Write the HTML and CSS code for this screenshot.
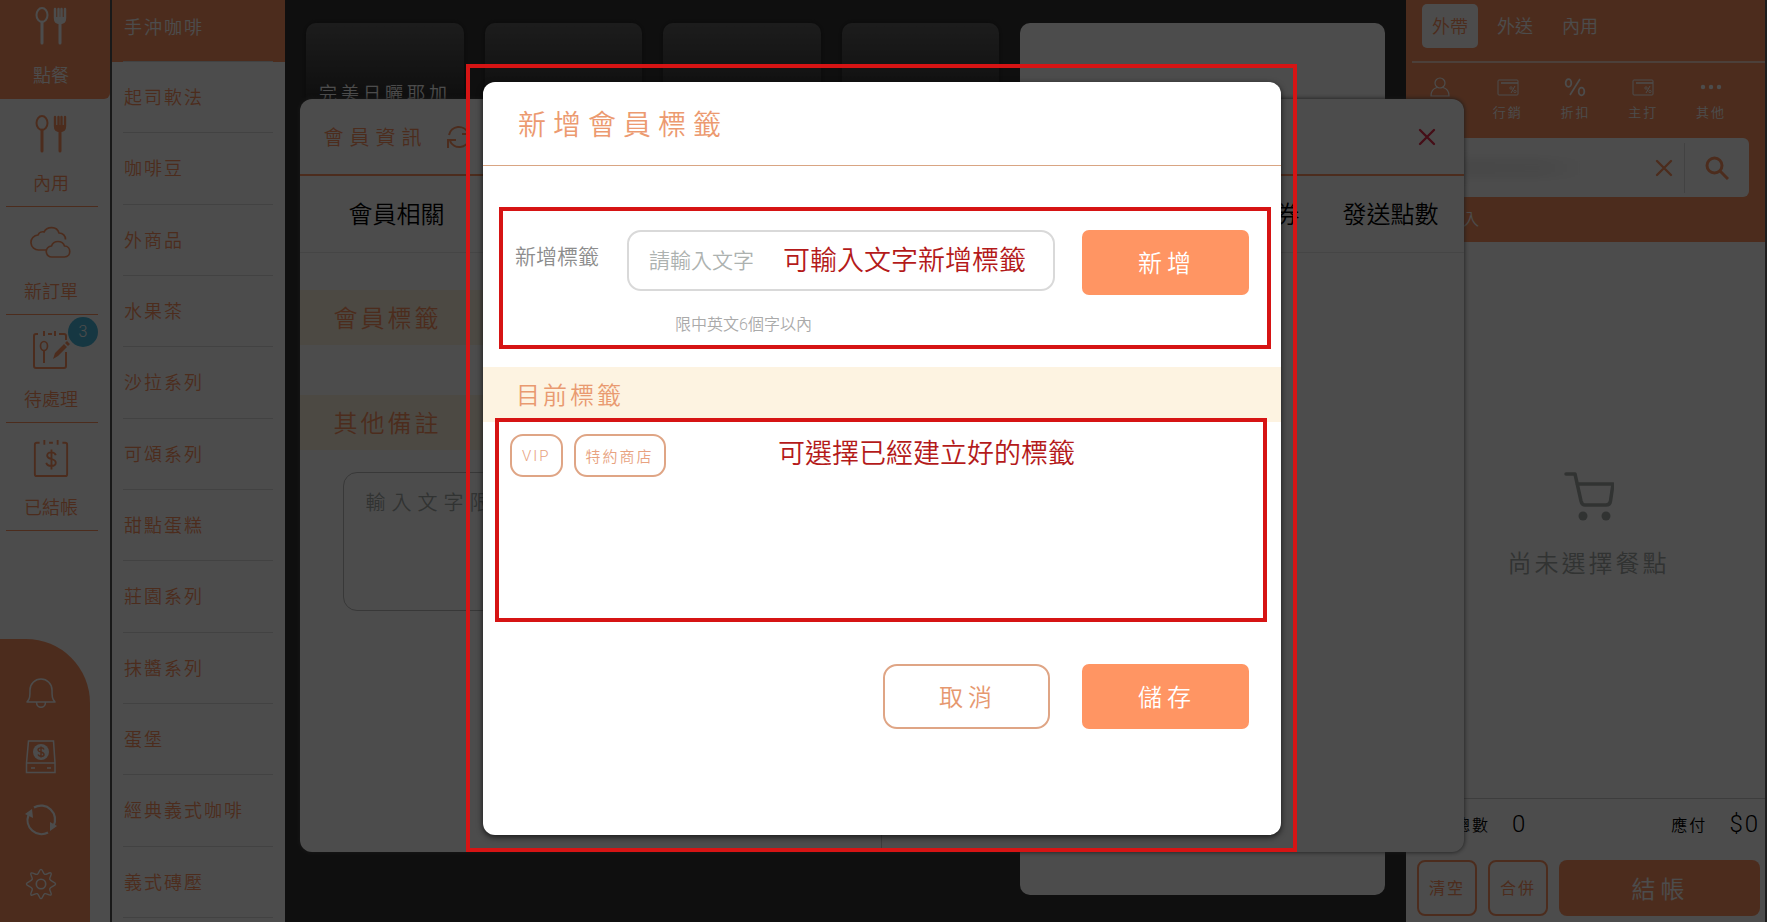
FILE: index.html
```html
<!DOCTYPE html>
<html lang="zh-Hant">
<head>
    <meta charset="UTF-8">
    <meta name="viewport" content="width=device-width, initial-scale=1.0">
    <title>新增會員標籤</title>
    <link rel="stylesheet" href="styles.css">
</head>
<body>
    <svg class="sprite" aria-hidden="true">
        <symbol id="i-cutlery" viewBox="0 0 32 38">
            <ellipse cx="7" cy="8" rx="5.5" ry="7" fill="none" stroke="currentColor" stroke-width="2"/>
            <path d="M7 15v21" stroke="currentColor" stroke-width="3" stroke-linecap="round"/>
            <path d="M25 16v20" stroke="currentColor" stroke-width="3" stroke-linecap="round"/>
            <path d="M20 2v9q0 5 5 5t5-5V2M23.500 2v11M26.500 2v11" fill="none" stroke="currentColor" stroke-width="2.400" stroke-linecap="round"/>
            <path d="M20 10h10q0 6-5 7-5-1-5-7z" fill="currentColor"/>
        </symbol>
        <symbol id="i-clouds" viewBox="0 0 42 38">
            <path d="M17 27H9a7.500 7.500 0 0 1-1-15c1-3 4-3.500 6-3 3-6 13-6 15 1 4 0 6.500 3 6.500 6.500" fill="none" stroke="currentColor" stroke-width="1.700"/>
            <path d="M22 34a5.500 5.500 0 0 1-.500-11c2-6 11-6 13 0 7 0 7 11 0 11z" fill="none" stroke="currentColor" stroke-width="1.700"/>
        </symbol>
        <symbol id="i-pending" viewBox="0 0 38 38">
            <path d="M6 3H4Q2 3 2 5v30q0 2 2 2h28q2 0 2-2V21M16 3h4M27 3h5q2 0 2 2v4M12 0v5M23 0v5" fill="none" stroke="currentColor" stroke-width="2"/>
            <ellipse cx="12" cy="15" rx="3.500" ry="4.500" fill="none" stroke="currentColor" stroke-width="1.700"/>
            <path d="M12 20v12" stroke="currentColor" stroke-width="2"/>
            <path d="M21 28l2-6 9-9 3 3-9 9zM33 12l2-2 3 3-2 2z" fill="currentColor"/>
        </symbol>
        <symbol id="i-paid" viewBox="0 0 38 40">
            <path d="M7 4H4Q2 4 2 6v31q0 2 2 2h30q2 0 2-2V6q0-2-2-2h-3M17 4h4M12 1v5M26 1v5" fill="none" stroke="currentColor" stroke-width="2"/>
            <path d="M24 17c-1-4-9-4-9 .500 0 4.500 9 2.500 9 7.500 0 4.500-9 4.500-10 0M19.500 11v21" fill="none" stroke="currentColor" stroke-width="2"/>
        </symbol>
        <symbol id="i-bell" viewBox="0 0 32 34">
            <path d="M2 26c3-3 3-6 3-12a11 11 0 0 1 22 0c0 6 0 9 3 12zM11.500 26c0 7 9 7 9 0" fill="none" stroke="currentColor" stroke-width="1.500" stroke-linejoin="round"/>
        </symbol>
        <symbol id="i-drawer" viewBox="0 0 32 34">
            <path d="M3.500 1h25L30 23v9.500H1.500V23zM1.500 23H30M6 28h4M22 28h4" fill="none" stroke="currentColor" stroke-width="1.500"/>
            <circle cx="16" cy="12" r="8" fill="currentColor"/>
            <path d="M19 9.500c-1-2.500-6-2-6 .500 0 2.500 6 1.500 6 4.500 0 2.500-5 2.500-6 0M16 6.500v11" fill="none" stroke="#ff9563" stroke-width="1.500"/>
        </symbol>
        <symbol id="i-sync" viewBox="0 0 32 34">
            <path d="M9 4.500A14 14 0 0 1 28.500 23M23 29.500A14 14 0 0 1 3.500 12" fill="none" stroke="currentColor" stroke-width="2.200"/>
            <path d="M0 11l7-5 1 9zM25 19v9l7-5z" fill="currentColor"/>
        </symbol>
        <symbol id="i-gear" viewBox="0 0 34 34">
            <path d="M17 1.500c2 0 2 4.500 4 5.200s5-2.800 6.600-1.300-2 4.600-1.300 6.600 6.200 3 6.200 5-5.500 3-6.200 5 2.800 5.200 1.300 6.600-4.600-2-6.600-1.300-2 5.200-4 5.200-2-4.500-4-5.200-5.200 2.800-6.600 1.300 2-4.600 1.300-6.600-6.200-3-6.200-5 5.500-3 6.200-5-2.800-5.200-1.300-6.600 4.600 2 6.600 1.300 2-5.200 4-5.200z" fill="none" stroke="currentColor" stroke-width="1.500"/>
            <circle cx="17" cy="17" r="5" fill="none" stroke="currentColor" stroke-width="1.700"/>
        </symbol>
        <symbol id="i-user" viewBox="0 0 22 20">
            <circle cx="11" cy="6" r="5" fill="none" stroke="currentColor" stroke-width="1.200"/>
            <path d="M8 10.500c-4 1-6 4-6 8.500h18c0-4.500-2-7.500-6-8.500" fill="none" stroke="currentColor" stroke-width="1.200"/>
        </symbol>
        <symbol id="i-coupon" viewBox="0 0 22 20">
            <rect x="1" y="3" width="20" height="15" rx="1" fill="none" stroke="currentColor"/>
            <path d="M4 6h17" stroke="currentColor" stroke-width="1.500"/>
            <path d="M14 16l4-7" stroke="currentColor"/>
            <circle cx="14" cy="11" r="1.200" fill="none" stroke="currentColor" stroke-width=".8"/>
            <circle cx="18" cy="14.500" r="1.200" fill="none" stroke="currentColor" stroke-width=".8"/>
        </symbol>
        <symbol id="i-percent" viewBox="0 0 22 20">
            <path d="M16 2L6 18" stroke="currentColor" stroke-width="1.600"/>
            <ellipse cx="4.500" cy="6" rx="2.800" ry="3.800" fill="none" stroke="currentColor" stroke-width="1.800"/>
            <ellipse cx="17.500" cy="14.500" rx="2.800" ry="3.800" fill="none" stroke="currentColor" stroke-width="1.800"/>
        </symbol>
        <symbol id="i-more" viewBox="0 0 22 20">
            <g fill="currentColor"><circle cx="3" cy="10" r="2.200"/><circle cx="11" cy="10" r="2.200"/><circle cx="19" cy="10" r="2.200"/></g>
        </symbol>
        <symbol id="i-close" viewBox="0 0 18 18">
            <path d="M2 2l14 14M16 2L2 16" stroke="currentColor" stroke-width="2.400" stroke-linecap="round"/>
        </symbol>
        <symbol id="i-search" viewBox="0 0 24 24">
            <circle cx="9.500" cy="9.500" r="7.500" fill="none" stroke="currentColor" stroke-width="3"/>
            <path d="M15 15l8 8" stroke="currentColor" stroke-width="3"/>
        </symbol>
        <symbol id="i-cart" viewBox="0 0 50 50">
            <path d="M2 3h9l6 27q1 4 4 4h21q4 0 4.500-4L49 13H13" fill="none" stroke="currentColor" stroke-width="3.500" stroke-linejoin="round" stroke-linecap="round"/>
            <circle cx="19" cy="45" r="4.500" fill="currentColor"/>
            <circle cx="42" cy="45" r="4.500" fill="currentColor"/>
        </symbol>
        <symbol id="i-refresh" viewBox="0 0 24 24">
            <path d="M2 10A10 10 0 0 1 21 8M22 14A10 10 0 0 1 3 16M22 2v7h-7M1 23v-8h8" fill="none" stroke="currentColor" stroke-width="2"/>
        </symbol>
    </svg>

    <div class="app">
        <nav class="side">
            <a href="#" class="side-item active"><svg class="side-icon"><use href="#i-cutlery"/></svg><span>點餐</span></a>
            <a href="#" class="side-item"><svg class="side-icon"><use href="#i-cutlery"/></svg><span>內用</span></a>
            <a href="#" class="side-item"><svg class="side-icon"><use href="#i-clouds"/></svg><span>新訂單</span></a>
            <a href="#" class="side-item"><svg class="side-icon"><use href="#i-pending"/></svg><span>待處理</span><b class="badge">3</b></a>
            <a href="#" class="side-item"><svg class="side-icon"><use href="#i-paid"/></svg><span>已結帳</span></a>
            <div class="tools">
                <button type="button" aria-label="通知"><svg><use href="#i-bell"/></svg></button>
                <button type="button" aria-label="錢櫃"><svg><use href="#i-drawer"/></svg></button>
                <button type="button" aria-label="同步"><svg><use href="#i-sync"/></svg></button>
                <button type="button" aria-label="設定"><svg><use href="#i-gear"/></svg></button>
            </div>
        </nav>

        <ul class="categories">
            <li class="active"><a href="#">手沖咖啡</a></li>
            <li><a href="#">起司軟法</a></li>
            <li><a href="#">咖啡豆</a></li>
            <li><a href="#">外商品</a></li>
            <li><a href="#">水果茶</a></li>
            <li><a href="#">沙拉系列</a></li>
            <li><a href="#">可頌系列</a></li>
            <li><a href="#">甜點蛋糕</a></li>
            <li><a href="#">莊園系列</a></li>
            <li><a href="#">抹醬系列</a></li>
            <li><a href="#">蛋堡</a></li>
            <li><a href="#">經典義式咖啡</a></li>
            <li><a href="#">義式磚壓</a></li>
        </ul>

        <main class="products">
            <div class="product">完美日曬耶加</div>
            <div class="product"></div>
            <div class="product"></div>
            <div class="product"></div>
            <div class="detail"></div>
        </main>

        <aside class="order">
            <header class="order-head">
                <div class="order-types">
                    <button type="button" class="active">外帶</button>
                    <button type="button">外送</button>
                    <button type="button">內用</button>
                </div>
                <div class="order-actions">
                    <button type="button" aria-label="會員"><svg><use href="#i-user"/></svg></button>
                    <button type="button"><svg><use href="#i-coupon"/></svg>行銷</button>
                    <button type="button"><svg><use href="#i-percent"/></svg>折扣</button>
                    <button type="button"><svg><use href="#i-coupon"/></svg>主打</button>
                    <button type="button"><svg><use href="#i-more"/></svg>其他</button>
                </div>
                <div class="search">
                    <span class="masked"></span>
                    <button type="button" aria-label="清除"><svg class="clear-icon"><use href="#i-close"/></svg></button>
                    <button type="button" class="search-btn" aria-label="搜尋"><svg class="search-icon"><use href="#i-search"/></svg></button>
                </div>
                <p class="order-note">入</p>
            </header>
            <div class="cart-empty">
                <svg><use href="#i-cart"/></svg>
                <p>尚未選擇餐點</p>
            </div>
            <footer class="order-foot">
                <div class="totals">
                    <span>總數</span><b>0</b>
                    <span class="due">應付</span><b>$0</b>
                </div>
                <div class="order-buttons">
                    <button type="button" class="outline">清空</button>
                    <button type="button" class="outline">合併</button>
                    <button type="button" class="checkout">結帳</button>
                </div>
            </footer>
        </aside>
    </div>

    <!-- 會員資訊 -->
    <div class="layer layer-member">
        <section class="member">
            <header class="member-head">
                <h2>會員資訊</h2>
                <svg class="refresh-icon"><use href="#i-refresh"/></svg>
                <button type="button" class="member-close" aria-label="關閉"><svg><use href="#i-close"/></svg></button>
            </header>
            <div class="member-tabs">
                <a href="#">會員相關</a>
                <a href="#" class="push">券</a>
                <a href="#">發送點數</a>
            </div>
            <div class="member-body">
                <div class="member-left">
                    <h3 class="band">會員標籤</h3>
                    <h3 class="band">其他備註</h3>
                    <textarea aria-label="其他備註" placeholder="輸入文字限"></textarea>
                </div>
            </div>
        </section>
    </div>

    <!-- 新增會員標籤 -->
    <div class="layer layer-tag">
        <section class="tag-dialog" role="dialog" aria-labelledby="tagTitle">
            <h1 id="tagTitle">新增會員標籤</h1>
            <form class="tag-form">
                <label for="tagName">新增標籤</label>
                <input type="text" id="tagName" placeholder="請輸入文字">
                <button type="button" class="btn btn-primary">新增</button>
            </form>
            <p class="hint">限中英文6個字以內</p>
            <h3 class="band">目前標籤</h3>
            <div class="tags">
                <button type="button" class="tag">VIP</button>
                <button type="button" class="tag">特約商店</button>
            </div>
            <div class="dialog-actions">
                <button type="button" class="btn btn-outline">取消</button>
                <button type="button" class="btn btn-primary">儲存</button>
            </div>

            <!-- 教學標示 -->
            <div class="frame frame-dialog"></div>
            <div class="frame frame-form"><span>可輸入文字新增標籤</span></div>
            <div class="frame frame-tags"><span>可選擇已經建立好的標籤</span></div>
        </section>
    </div>
</body>
</html>
```
FILE: styles.css
```css
* {
    margin: 0;
    padding: 0;
    box-sizing: border-box;
}

body {
    height: 100vh;
    overflow: hidden;
    position: relative;
    background: #333;
    font-family: Roboto, "Noto Sans CJK TC", sans-serif;
    font-weight: 350;
    font-size: 18px;
}

button, input, textarea {
    font: inherit;
    color: inherit;
    background: none;
    border: 0;
}

button { cursor: pointer; }
a { color: inherit; text-decoration: none; }
ul { list-style: none; }
svg { display: block; }

.sprite {
    position: absolute;
    width: 0;
    height: 0;
}

.app {
    display: flex;
    height: 100vh;
    border-right: 2px solid #666;
}

/* 左側選單 */
.side {
    width: 112px;
    flex: none;
    display: flex;
    flex-direction: column;
    background: #fff;
    border-right: 2px solid #555;
    color: #ff9563;
}

.side-item {
    position: relative;
    height: 108px;
    margin: 0 12px 0 6px;
    border-bottom: 1px solid #ff9563;
    display: flex;
    flex-direction: column;
    align-items: center;
    justify-content: flex-end;
    gap: 18px;
    padding: 0 2px 9px 0;
    line-height: 26px;
}

.side-item.active {
    height: 99px;
    margin: 0;
    padding: 0 8px 10px 0;
    border: 0;
    border-radius: 0 0 6px 0;
    background: #ff9563;
    color: #fff;
}

.side-icon {
    width: 42px;
    height: 38px;
}

.badge {
    position: absolute;
    top: 2px;
    right: 0;
    width: 30px;
    height: 30px;
    border-radius: 50%;
    background: #4bb9dc;
    color: #fff;
    font-weight: 300;
    font-size: 16px;
    line-height: 30px;
    text-align: center;
}

.tools {
    width: 90px;
    height: 283px;
    margin-top: auto;
    padding: 22px 8px 6px 0;
    display: flex;
    flex-direction: column;
    justify-content: space-around;
    align-items: center;
    background: #ff9563;
    border-radius: 0 64px 0 0;
    color: #fff;
}

.tools svg {
    width: 32px;
    height: 34px;
}

/* 分類 */
.categories {
    width: 173px;
    height: calc(100vh - 4px);
    flex: none;
    display: flex;
    flex-direction: column;
    background: #fff;
    box-shadow: 0 4px 0 #fff;
    color: #ff9563;
    letter-spacing: 2px;
}

.categories li {
    flex: 1;
    padding: 0 12px 0 11px;
}

.categories a {
    height: 100%;
    display: flex;
    align-items: center;
    border-bottom: 1px solid #dcdcdc;
    padding: 0 0 2px 1px;
}

.categories .active {
    flex: 0 0 62px;
    background: #ff9563;
    color: #fff;
}

.categories .active a { padding-bottom: 10px; }

/* 商品 */
.products {
    flex: 1;
    min-width: 0;
    padding: 23px 21px 27px 21px;
    display: grid;
    grid-template-columns: repeat(4, 1fr) 365px;
    gap: 21px;
    background: #333;
}

.product {
    height: 130px;
    border-radius: 10px;
    background: linear-gradient(#606060, #333 75px);
    box-shadow: 0 0 4px #222;
    padding: 57px 13px 0;
    color: #fff;
    letter-spacing: 4px;
    line-height: 28px;
    white-space: nowrap;
    overflow: hidden;
}

.detail {
    background: #fff;
    border-radius: 10px;
}

/* 訂單 */
.order {
    width: 359px;
    flex: none;
    display: flex;
    flex-direction: column;
    background: #fff;
}

.order-head {
    background: #ff9563;
    color: #fff;
    height: 242px;
}

.order-types {
    height: 63px;
    margin-left: 6px;
    padding: 4px 10px 0;
    border-bottom: 2px solid #ffd5c1;
    display: flex;
    gap: 9px;
}

.order-types button {
    width: 56px;
    height: 44px;
    border-radius: 5px;
    line-height: 46px;
}

.order-types .active {
    background: #fff;
    color: #ff9563;
}

.order-actions {
    height: 75px;
    display: flex;
    padding: 14px 20px 0 0;
}

.order-actions button {
    flex: 1;
    display: flex;
    flex-direction: column;
    align-items: center;
    gap: 6px;
    font-size: 13px;
    line-height: 20px;
    letter-spacing: 2px;
}

.order-actions svg {
    width: 22px;
    height: 20px;
}

.search {
    height: 59px;
    margin: 0 16px;
    background: #fff;
    border-radius: 6px;
    color: #ff9563;
    display: flex;
    align-items: center;
}

.masked {
    flex: 1;
    height: 20px;
    margin-right: 56px;
    background: linear-gradient(90deg, #eee, #f2f2f2 70%, #fff);
    filter: blur(4px);
}

.search button {
    padding: 0 11px;
}

.search .search-btn {
    height: 50px;
    padding: 0 20px;
    border-left: 1px solid #ddd;
}

.clear-icon {
    width: 18px;
    height: 18px;
}

.search-icon {
    width: 24px;
    height: 24px;
}

.order-note {
    padding: 10px 57px;
    font-size: 16px;
    line-height: 26px;
}

.cart-empty {
    flex: 1;
    display: flex;
    flex-direction: column;
    align-items: center;
    padding: 229px 0 0 6px;
    color: #a5aaa8;
    font-size: 24px;
    letter-spacing: 3px;
}

.cart-empty svg {
    width: 50px;
    height: 50px;
    margin-bottom: 23px;
}

.order-foot {
    height: 124px;
    border-top: 1px solid #ccc;
    color: #000;
}

.totals {
    height: 61px;
    padding: 0 5px 12px 48px;
    display: flex;
    align-items: center;
    font-size: 16px;
    letter-spacing: 2px;
}

.totals b {
    font-size: 24px;
    font-weight: 300;
    margin-left: 22px;
}

.totals .due { margin-left: auto; }

.order-buttons {
    display: flex;
    gap: 11px;
    height: 56px;
    padding: 0 5px 0 11px;
}

.order-buttons button {
    border-radius: 8px;
    text-align: center;
}

.order-buttons .outline {
    width: 60px;
    border: 2px solid #ff9563;
    color: #ff9563;
    font-size: 16px;
    font-weight: 400;
    letter-spacing: 2px;
    padding-bottom: 2px;
}

.order-buttons .checkout {
    flex: 1;
    background: #ff9563;
    color: #fff;
    font-size: 24px;
    letter-spacing: 5px;
    padding: 0 0 2px 2px;
}

/* 彈窗 */
.layer {
    position: absolute;
    inset: 0;
    display: flex;
    justify-content: center;
}

.layer-member { padding: 99px 4px 70px 0; }

.layer-tag {
    padding: 82px 3px 87px 0;
    background: rgba(0, 0, 0, 0.7);
}

.band {
    height: 55px;
    background: #fdf3e1;
    color: #ff9563;
    font-size: 24px;
    font-weight: 350;
    line-height: 58px;
    letter-spacing: 3px;
}

.member {
    width: 1164px;
    max-width: 90%;
    display: flex;
    flex-direction: column;
    background: #fff;
    border-radius: 12px;
    box-shadow: 0 0 5px #555;
}

.member-head {
    height: 77px;
    padding: 0 28px 0 24px;
    border-bottom: 2px solid #ff9563;
    display: flex;
    align-items: center;
    color: #ff9563;
}

.member-head h2 {
    font-size: 20px;
    font-weight: 350;
    letter-spacing: 6px;
}

.refresh-icon {
    width: 24px;
    height: 24px;
    margin-left: 19px;
}

.member-close {
    margin-left: auto;
    color: #e6304f;
}

.member-close svg {
    width: 18px;
    height: 18px;
}

.member-tabs {
    height: 77px;
    padding: 0 25px 4px 49px;
    border-bottom: 1px solid #e6e6e6;
    display: flex;
    align-items: center;
    gap: 43px;
    font-size: 24px;
    color: #000;
}

.member-tabs .push { margin-left: auto; }

.member-body {
    flex: 1;
    display: flex;
}

.member-left {
    width: 50%;
    padding-top: 37px;
    border-right: 1px solid #ccc;
}

.member-left .band {
    margin-bottom: 50px;
    padding-left: 34px;
}

.member-left textarea {
    display: block;
    width: 500px;
    height: 139px;
    margin: -28px 0 0 43px;
    padding: 15px 22px;
    border: 1px solid #bbb;
    border-radius: 14px;
    resize: none;
    font-size: 20px;
    line-height: 30px;
    letter-spacing: 6px;
}

.member-left textarea::placeholder { color: #a5aaa8; }

/* 新增標籤視窗 */
.tag-dialog {
    position: relative;
    width: 798px;
    max-width: 90%;
    background: #fff;
    border-radius: 12px;
    box-shadow: 0 2px 6px rgba(0, 0, 0, 0.7);
}

.tag-dialog h1 {
    height: 84px;
    padding-left: 35px;
    border-bottom: 1px solid #d9a583;
    color: #ec9a70;
    font-size: 28px;
    font-weight: 350;
    line-height: 88px;
    letter-spacing: 7px;
}

.tag-form {
    display: flex;
    align-items: flex-start;
    padding: 64px 32px 0;
    font-size: 21px;
}

.tag-form label {
    width: 112px;
    color: #8d8d8d;
    line-height: 54px;
}

.tag-form input {
    flex: 1;
    min-width: 0;
    height: 61px;
    margin-right: 27px;
    padding: 0 20px;
    border: 2px solid #d9d9d9;
    border-radius: 14px;
}

.tag-form input::placeholder { color: #adb2b0; }

.btn {
    width: 167px;
    height: 65px;
    padding: 0 0 2px 3px;
    font-size: 24px;
    letter-spacing: 5px;
}

.btn-primary {
    background: #ff9563;
    border-radius: 7px;
    color: #fff;
}

.btn-outline {
    border: 2px solid #dfa585;
    border-radius: 14px;
    color: #e6986f;
}

.hint {
    padding: 17px 0 0 192px;
    color: #aaa;
    font-size: 16px;
    line-height: 26px;
}

.tag-dialog .band {
    margin-top: 29px;
    padding-left: 33px;
    color: #e99a70;
}

.tags {
    height: 242px;
    padding: 12px 27px;
    display: flex;
    align-items: flex-start;
    gap: 11px;
}

.tag {
    height: 43px;
    padding: 0 10px;
    border: 2px solid #dfa585;
    border-radius: 13px;
    color: #e8a280;
    font-size: 15px;
    letter-spacing: 2px;
}

.dialog-actions {
    display: flex;
    justify-content: flex-end;
    gap: 32px;
    padding-right: 32px;
}

/* 紅框標示 */
.frame {
    position: absolute;
    border: 4px solid #d61414;
    color: #b41a1a;
    font-size: 27px;
    line-height: 40px;
    pointer-events: none;
}

.frame-dialog { inset: -18px -16px -17px -17px; }

.frame-form {
    inset: 125px 10px auto 16px;
    height: 142px;
    padding: 30px 0 0 280px;
}

.frame-tags {
    inset: 336px 14px auto 12px;
    height: 204px;
    padding: 12px 0 0 279px;
}
```
